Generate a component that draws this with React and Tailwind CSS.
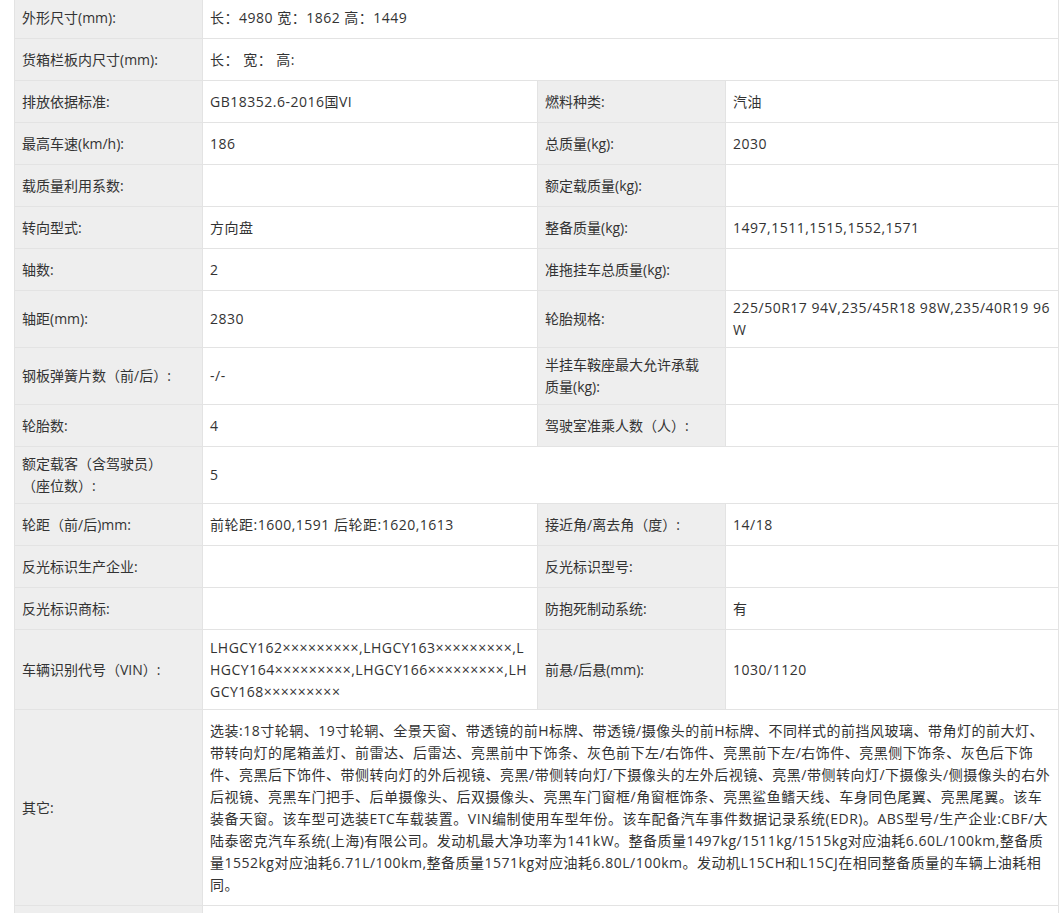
import React from 'react';

const L = 'bg-[#eeeeee] border border-[#e3e3e3] px-[7px] align-middle text-left font-normal';
const V = 'bg-white border border-[#e3e3e3] px-[7px] align-middle tracking-[0.5px]';

const rows4 = [
  ['排放依据标准:', 'GB18352.6-2016国VI', '燃料种类:', '汽油', 42],
  ['最高车速(km/h):', '186', '总质量(kg):', '2030', 42],
  ['载质量利用系数:', '', '额定载质量(kg):', '', 42],
  ['转向型式:', '方向盘', '整备质量(kg):', '1497,1511,1515,1552,1571', 42],
  ['轴数:', '2', '准拖挂车总质量(kg):', '', 42],
  ['轴距(mm):', '2830', '轮胎规格:', '225/50R17 94V,235/45R18 98W,235/40R19 96W', 57],
  ['钢板弹簧片数（前/后）:', '-/-', <>半挂车鞍座最大允许承载<br />质量(kg):</>, '', 57],
  ['轮胎数:', '4', '驾驶室准乘人数（人）:', '', 42],
];
const rows4b = [
  ['轮距（前/后)mm:', '前轮距:1600,1591 后轮距:1620,1613', '接近角/离去角（度）:', '14/18', 42],
  ['反光标识生产企业:', '', '反光标识型号:', '', 42],
  ['反光标识商标:', '', '防抱死制动系统:', '有', 42],
  ['车辆识别代号（VIN）:', 'LHGCY162×××××××××,LHGCY163×××××××××,LHGCY164×××××××××,LHGCY166×××××××××,LHGCY168×××××××××', '前悬/后悬(mm):', '1030/1120', 80],
];

const other = '选装:18寸轮辋、19寸轮辋、全景天窗、带透镜的前H标牌、带透镜/摄像头的前H标牌、不同样式的前挡风玻璃、带角灯的前大灯、带转向灯的尾箱盖灯、前雷达、后雷达、亮黑前中下饰条、灰色前下左/右饰件、亮黑前下左/右饰件、亮黑侧下饰条、灰色后下饰件、亮黑后下饰件、带侧转向灯的外后视镜、亮黑/带侧转向灯/下摄像头的左外后视镜、亮黑/带侧转向灯/下摄像头/侧摄像头的右外后视镜、亮黑车门把手、后单摄像头、后双摄像头、亮黑车门窗框/角窗框饰条、亮黑鲨鱼鳍天线、车身同色尾翼、亮黑尾翼。该车装备天窗。该车型可选装ETC车载装置。VIN编制使用车型年份。该车配备汽车事件数据记录系统(EDR)。ABS型号/生产企业:CBF/大陆泰密克汽车系统(上海)有限公司。发动机最大净功率为141kW。整备质量1497kg/1511kg/1515kg对应油耗6.60L/100km,整备质量1552kg对应油耗6.71L/100km,整备质量1571kg对应油耗6.80L/100km。发动机L15CH和L15CJ在相同整备质量的车辆上油耗相同。';

const Row4 = ({ r }) => (
  <tr style={{ height: r[4] }}>
    <th className={L}>{r[0]}</th>
    <td className={V + ' break-all'}>{r[1]}</td>
    <th className={L}>{r[2]}</th>
    <td className={V + ' break-all'}>{r[3]}</td>
  </tr>
);

export default function App() {
  return (
    <div className="bg-white min-h-[913px] overflow-hidden pl-[14px] pr-[5px] text-[14px] leading-[22px] text-[#333333]" style={{ fontFamily: '"Open Sans", "Noto Sans CJK SC", sans-serif' }}>
      <table className="w-[1044px] border-collapse table-fixed -mt-[4px]">
        <colgroup>
          <col className="w-[188px]" />
          <col className="w-[335px]" />
          <col className="w-[188px]" />
          <col className="w-[333px]" />
        </colgroup>
        <tbody>
          <tr className="h-[42px]">
            <th className={L}>外形尺寸(mm):</th>
            <td className={V} colSpan={3}>长：4980 宽：1862 高：1449</td>
          </tr>
          <tr className="h-[42px]">
            <th className={L}>货箱栏板内尺寸(mm):</th>
            <td className={V} colSpan={3}>长： 宽： 高:</td>
          </tr>
          {rows4.map((r, i) => <Row4 key={i} r={r} />)}
          <tr className="h-[57px]">
            <th className={L}>额定载客（含驾驶员）<br />（座位数）:</th>
            <td className={V} colSpan={3}>5</td>
          </tr>
          {rows4b.map((r, i) => <Row4 key={i} r={r} />)}
          <tr className="h-[196px]">
            <th className={L}>其它:</th>
            <td className={V + ' break-all py-[4px]'} colSpan={3}>{other}</td>
          </tr>
          <tr className="h-[42px]">
            <th className={L}></th>
            <td className={V} colSpan={3}></td>
          </tr>
        </tbody>
      </table>
    </div>
  );
}
